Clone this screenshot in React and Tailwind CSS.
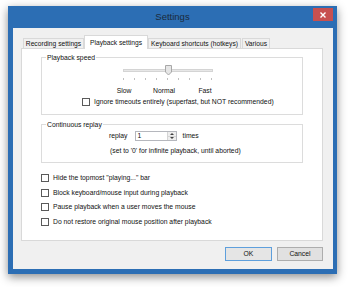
import React from "react";

function Checkbox() {
  return <div className="w-[8px] h-[8px] border border-[#5a5a5a] bg-white shrink-0" />;
}

function GroupLabel({ children }) {
  return (
    <div className="absolute top-[-5px] left-[4px] bg-white px-[1px] leading-[9px] whitespace-nowrap">{children}</div>
  );
}

function Slider() {
  const ticks = Array.from({ length: 9 }, (_, i) => 3.5 + i * 11);
  return (
    <svg width="96" height="16" viewBox="0 0 96 16" className="block ml-[78px]">
      <rect x="3.5" y="4.5" width="89" height="2" fill="#e7e7e7" stroke="#d4d4d4" strokeWidth="1" />
      {ticks.map((x) => (
        <rect key={x} x={x - 0.5} y="13" width="1" height="2" fill="#c0c0c0" />
      ))}
      <path d="M45.5 0.5 H51.5 V7 L48.5 10 L45.5 7 Z" fill="#e6e6e6" stroke="#a8a8a8" strokeWidth="1" />
    </svg>
  );
}

function Tab({ children, width, selected, ml }) {
  if (selected) {
    return (
      <div
        className={`h-[14px] bg-white border-l border-t border-r border-[#d9d9d9] flex items-start justify-center pt-[2px] leading-[9px] whitespace-nowrap text-[6.7px] ${ml || ""}`}
        style={{ width }}
      >
        {children}
      </div>
    );
  }
  return (
    <div
      className={`h-[10px] mb-[1px] bg-[#f0f0f0] border-l border-t border-r border-[#d9d9d9] flex items-center justify-center leading-[9px] whitespace-nowrap text-[6.7px] ${ml || ""}`}
      style={{ width }}
    >
      {children}
    </div>
  );
}

export default function App() {
  return (
    <div className="w-[350px] h-[287px] bg-white overflow-hidden pt-[6px] pl-[8px] font-['Liberation_Sans',Arial,sans-serif] text-[6.8px] text-[#111] whitespace-nowrap">
      <div className="w-[329px] h-[268px] bg-[#2c6eb4] flex flex-col shadow-[0_3px_9px_rgba(0,0,0,0.45)]">
        {/* Title bar */}
        <div className="relative h-[22px] flex items-center justify-center">
          <span className="text-[9.5px] text-[#1b2a3a] leading-none">Settings</span>
          <div className="absolute top-[2px] right-[4px] w-[20px] h-[13px] bg-[#c75050] flex items-center justify-center">
            <svg width="6" height="6" viewBox="0 0 6 6">
              <path d="M0.5 0.5 L5.5 5.5 M5.5 0.5 L0.5 5.5" stroke="#fff" strokeWidth="1.4" />
            </svg>
          </div>
        </div>
        {/* Client */}
        <div className="ml-[5px] mr-[4px] mb-[5px] flex-1 bg-[#f0f0f0] pt-[7px] pl-[8px] pr-[10px] flex flex-col">
          <div className="relative z-10 flex items-end h-[14px]">
            <Tab width={61} ml="ml-[2px]">Recording settings</Tab>
            <Tab width={64} selected>Playback settings</Tab>
            <Tab width={93}>Keyboard shortcuts (hotkeys)</Tab>
            <Tab width={28} ml="ml-[1px]">Various</Tab>
          </div>
          <div className="-mt-px h-[193px] bg-white border border-[#d9d9d9] px-[19px] flex flex-col">
            {/* Playback speed */}
            <div className="relative mt-[8px] h-[58px] border border-[#dcdcdc] flex flex-col">
              <GroupLabel>Playback speed</GroupLabel>
              <div className="mt-[7px]">
                <Slider />
              </div>
              <div className="mt-[6px] h-[8px] flex items-center leading-[8px]">
                <div className="ml-[67px] w-[30px] text-center">Slow</div>
                <div className="ml-[10px] w-[30px] text-center">Normal</div>
                <div className="ml-[11px] w-[30px] text-center">Fast</div>
              </div>
              <div className="mt-[3px] h-[8px] flex items-center gap-[4px] ml-[40px] leading-[8px]">
                <Checkbox />
                <span>Ignore timeouts entirely (superfast, but NOT recommended)</span>
              </div>
            </div>
            {/* Continuous replay */}
            <div className="relative mt-[9px] h-[39px] border border-[#dcdcdc] flex flex-col">
              <GroupLabel>Continuous replay</GroupLabel>
              <div className="mt-[6px] h-[10px] flex items-center ml-[67px] leading-[8px]">
                <span>replay</span>
                <div className="ml-[7px] w-[42px] h-[10px] border border-[#b5b7bd] bg-white flex">
                  <div className="flex-1 pl-[2px] leading-[8px]">1</div>
                  <div className="w-[9px] border-l border-[#d5d5d5] bg-[#eeeeee] flex flex-col">
                    <div className="flex-1 flex items-center justify-center border-b border-[#d5d5d5]">
                      <svg width="4" height="2" viewBox="0 0 4 2"><path d="M0 2 L2 0 L4 2 Z" fill="#404040" /></svg>
                    </div>
                    <div className="flex-1 flex items-center justify-center">
                      <svg width="4" height="2" viewBox="0 0 4 2"><path d="M0 0 L2 2 L4 0 Z" fill="#404040" /></svg>
                    </div>
                  </div>
                </div>
                <span className="ml-[6px]">times</span>
              </div>
              <div className="mt-[6px] h-[8px] ml-[68px] leading-[8px]">
                (set to '0' for infinite playback, until aborted)
              </div>
            </div>
            {/* Checkboxes */}
            <div className="mt-[8px] flex flex-col">
              {[
                'Hide the topmost "playing..." bar',
                "Block keyboard/mouse input during playback",
                "Pause playback when a user moves the mouse",
                "Do not restore original mouse position after playback",
              ].map((t) => (
                <div key={t} className="h-[14.5px] flex items-center gap-[4px] leading-[8px]">
                  <Checkbox />
                  <span>{t}</span>
                </div>
              ))}
            </div>
          </div>
          <div className="mt-[6px] flex justify-end gap-[5px]">
            <div className="w-[47px] h-[14px] bg-[#e5e5e5] border border-[#5e9fdc] flex items-center justify-center leading-[8px]">
              OK
            </div>
            <div className="w-[46px] h-[14px] bg-[#e1e1e1] border border-[#adadad] flex items-center justify-center leading-[8px]">
              Cancel
            </div>
          </div>
        </div>
      </div>
    </div>
  );
}
